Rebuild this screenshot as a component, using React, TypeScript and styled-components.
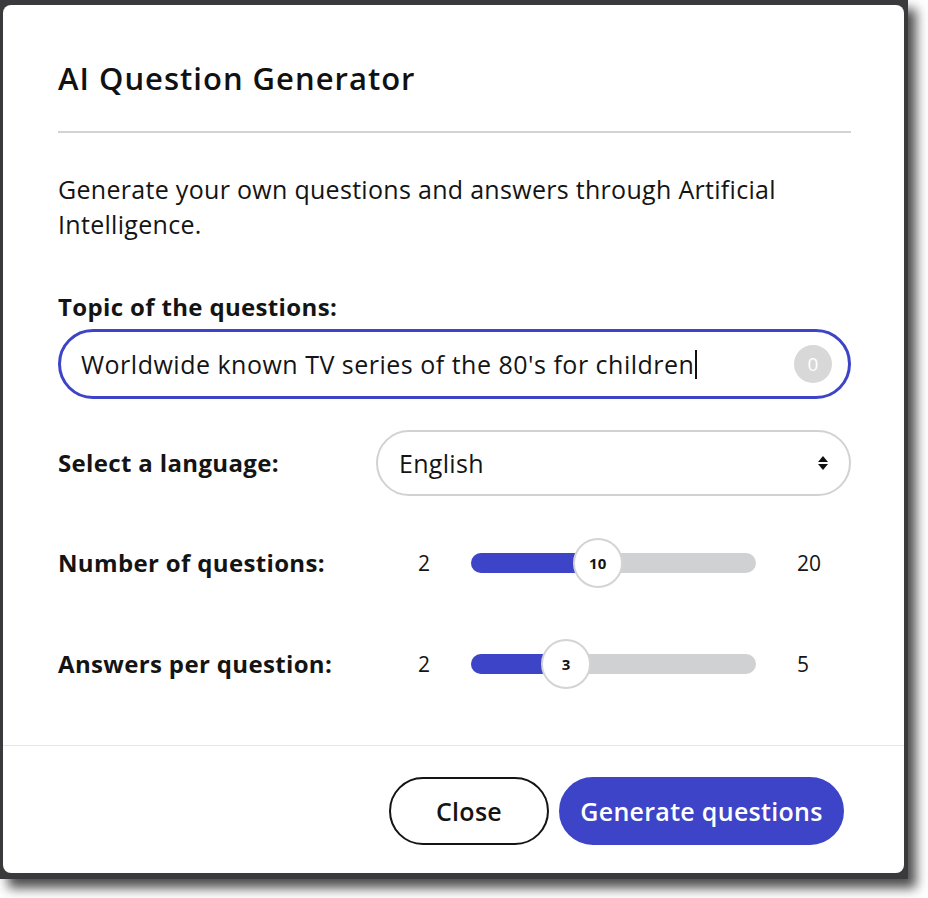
import React from 'react';
import styled, { createGlobalStyle } from 'styled-components';

const GlobalStyle = createGlobalStyle`
  html, body {
    margin: 0;
    padding: 0;
    background: #ffffff;
  }
  body {
    font-family: 'Open Sans', 'Lato', sans-serif;
    color: #141414;
  }
  * {
    box-sizing: border-box;
  }
`;

const BLUE = '#3d44c7';

const Page = styled.div`
  width: 928px;
  height: 898px;
  overflow: hidden;
`;

const Backdrop = styled.div`
  width: 908px;
  height: 879px;
  padding: 5px 4px 6px 3px;
  background: #3a3a3c;
  box-shadow: 8px 9px 11px rgba(0, 0, 0, 0.7);
`;

const Modal = styled.div`
  height: 100%;
  background: #ffffff;
  border-radius: 8px;
  display: flex;
  flex-direction: column;
`;

const Header = styled.header`
  padding: 55px 53px 0 55px;
`;

const Title = styled.h2`
  margin: 0;
  font-size: 31px;
  line-height: 36px;
  font-weight: 600;
  letter-spacing: 1px;
  color: #111;
`;

const Divider = styled.hr`
  margin: 35px 0 0;
  border: none;
  height: 2px;
  background: #d3d3d3;
`;

const Body = styled.div`
  padding: 39px 53px 0 55px;
  flex: 1;
`;

const Description = styled.p`
  margin: 0;
  font-size: 25px;
  line-height: 35px;
  letter-spacing: 0.3px;
`;

const FieldLabel = styled.label`
  display: block;
  margin-top: 50px;
  font-size: 24px;
  line-height: 30px;
  font-weight: 700;
  letter-spacing: 0.35px;
`;

const TopicInput = styled.div`
  margin-top: 7px;
  height: 70px;
  border: 3px solid ${BLUE};
  border-radius: 35px;
  display: flex;
  align-items: center;
  padding: 0 16px 0 20px;
  font-size: 25px;
  letter-spacing: 0.5px;
`;

const InputText = styled.span`
  flex: 1;
  display: flex;
  align-items: center;
  white-space: nowrap;
`;

const Caret = styled.span`
  display: inline-block;
  width: 2px;
  height: 29px;
  margin-left: 1px;
  background: #111;
`;

const Counter = styled.span`
  width: 38px;
  height: 38px;
  border-radius: 50%;
  background: #d8d8d8;
  color: #fff;
  font-size: 19px;
  letter-spacing: 0;
  display: flex;
  align-items: center;
  justify-content: center;
`;

const Row = styled.div<{ $top: number }>`
  display: grid;
  grid-template-columns: 318px 1fr;
  align-items: center;
  margin-top: ${({ $top }) => $top}px;
`;

const RowLabel = styled.span`
  font-size: 24px;
  line-height: 30px;
  font-weight: 700;
  letter-spacing: 0.35px;
`;

const SelectBox = styled.div`
  height: 66px;
  border: 2px solid #d2d2d2;
  border-radius: 33px;
  display: flex;
  align-items: center;
  justify-content: space-between;
  padding: 0 20px 0 21px;
  font-size: 25px;
  letter-spacing: 0.3px;
`;

const SliderWrap = styled.div`
  display: grid;
  grid-template-columns: 95px 1fr 95px;
  align-items: center;
  height: 50px;
`;

const Bound = styled.span<{ $side: 'min' | 'max' }>`
  font-size: 21px;
  text-align: ${({ $side }) => ($side === 'min' ? 'right' : 'left')};
  padding: ${({ $side }) => ($side === 'min' ? '0 41px 0 0' : '0 0 0 41px')};
`;

const Track = styled.div`
  position: relative;
  height: 20px;
  border-radius: 10px;
  background: #d0d1d2;
`;

const Fill = styled.div`
  height: 100%;
  border-radius: 10px 0 0 10px;
  background: ${BLUE};
`;

const Thumb = styled.div`
  position: absolute;
  top: 50%;
  width: 50px;
  height: 50px;
  margin: -25px 0 0 -25px;
  border-radius: 50%;
  border: 2px solid #d4d4d4;
  background: #fff;
  display: flex;
  align-items: center;
  justify-content: center;
  font-size: 15px;
  font-weight: 700;
`;

const Footer = styled.footer`
  border-top: 1px solid #e6e6e6;
  padding: 31px 60px 0 0;
  height: 128px;
  display: flex;
  justify-content: flex-end;
  gap: 10px;
`;

const Button = styled.button<{ $primary?: boolean }>`
  height: 68px;
  border-radius: 34px;
  font-family: inherit;
  font-size: 25px;
  font-weight: 600;
  letter-spacing: 0.3px;
  cursor: pointer;
  padding: 0;
  border: 2px solid ${({ $primary }) => ($primary ? BLUE : '#141414')};
  background: ${({ $primary }) => ($primary ? BLUE : '#fff')};
  color: ${({ $primary }) => ($primary ? '#fff' : '#141414')};
  width: ${({ $primary }) => ($primary ? '285px' : '160px')};
`;

const SortIcon = () => (
  <svg width="12" height="16" viewBox="0 0 12 16">
    <path d="M6 1 L11 7 H1 Z" fill="#111" />
    <path d="M1 9 H11 L6 15 Z" fill="#111" />
  </svg>
);

interface SliderProps {
  min: number;
  max: number;
  value: number;
}

const RangeSlider: React.FC<SliderProps> = ({ min, max, value }) => {
  const pct = ((value - min) / (max - min)) * 100;
  return (
    <SliderWrap>
      <Bound $side="min">{min}</Bound>
      <Track role="slider" aria-valuemin={min} aria-valuemax={max} aria-valuenow={value}>
        <Fill style={{ width: `${pct}%` }} />
        <Thumb style={{ left: `${pct}%` }}>{value}</Thumb>
      </Track>
      <Bound $side="max">{max}</Bound>
    </SliderWrap>
  );
};

const App: React.FC = () => {
  return (
    <Page>
      <GlobalStyle />
      <Backdrop>
        <Modal>
          <Header>
            <Title>AI Question Generator</Title>
            <Divider />
          </Header>
          <Body>
            <Description>
              Generate your own questions and answers through Artificial Intelligence.
            </Description>
            <FieldLabel>Topic of the questions:</FieldLabel>
            <TopicInput>
              <InputText>
                Worldwide known TV series of the 80's for children
                <Caret />
              </InputText>
              <Counter>0</Counter>
            </TopicInput>
            <Row $top={31}>
              <RowLabel>Select a language:</RowLabel>
              <SelectBox>
                English
                <SortIcon />
              </SelectBox>
            </Row>
            <Row $top={42}>
              <RowLabel>Number of questions:</RowLabel>
              <RangeSlider min={2} max={20} value={10} />
            </Row>
            <Row $top={51}>
              <RowLabel>Answers per question:</RowLabel>
              <RangeSlider min={2} max={5} value={3} />
            </Row>
          </Body>
          <Footer>
            <Button>Close</Button>
            <Button $primary>Generate questions</Button>
          </Footer>
        </Modal>
      </Backdrop>
    </Page>
  );
};

export default App;
